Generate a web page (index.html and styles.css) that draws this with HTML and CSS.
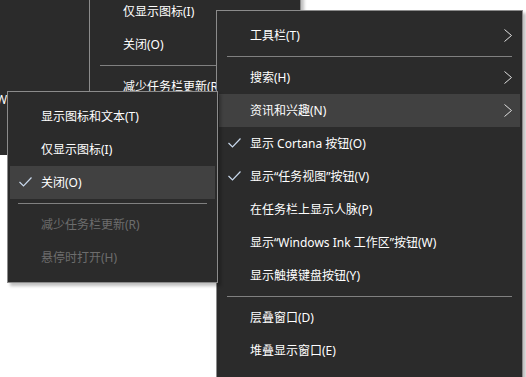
FILE: index.html
```html
<!DOCTYPE html>
<html lang="zh-CN">
<head>
    <meta charset="UTF-8">
    <title>任务栏菜单</title>
    <link rel="stylesheet" href="styles.css">
</head>
<body>

    <div class="desk">
        <!-- achtergrond venster -->
        <div class="panel"><span class="panel-text">W</span></div>

        <!-- oud submenu, half verborgen -->
        <div class="menu menu-back">
            <div class="item"><span class="slot"></span><span class="label">显示图标和文本(T)</span></div>
            <div class="item"><span class="slot"></span><span class="label">仅显示图标(I)</span></div>
            <div class="item"><span class="slot"></span><span class="label">关闭(O)</span></div>
            <div class="sep"></div>
            <div class="item"><span class="slot"></span><span class="label">减少任务栏更新(R)</span></div>
            <div class="item"><span class="slot"></span><span class="label">悬停时打开(H)</span></div>
        </div>

        <!-- hoofdmenu -->
        <div class="menu menu-main">
            <div class="item">
                <span class="slot"></span><span class="label">工具栏(T)</span>
                <svg class="arrow" width="8" height="13" viewBox="0 0 8 13"><polyline points="0.5,0.5 7.5,6.5 0.5,12.5"/></svg>
            </div>
            <div class="sep"></div>
            <div class="item">
                <span class="slot"></span><span class="label">搜索(H)</span>
                <svg class="arrow" width="8" height="13" viewBox="0 0 8 13"><polyline points="0.5,0.5 7.5,6.5 0.5,12.5"/></svg>
            </div>
            <div class="item active">
                <span class="slot"></span><span class="label">资讯和兴趣(N)</span>
                <svg class="arrow" width="8" height="13" viewBox="0 0 8 13"><polyline points="0.5,0.5 7.5,6.5 0.5,12.5"/></svg>
            </div>
            <div class="item">
                <span class="slot"><svg class="check" width="13" height="10" viewBox="0 0 13 10"><polyline points="0.5,5 4.5,9 12.5,0.5"/></svg></span>
                <span class="label">显示 Cortana 按钮(O)</span>
            </div>
            <div class="item">
                <span class="slot"><svg class="check" width="13" height="10" viewBox="0 0 13 10"><polyline points="0.5,5 4.5,9 12.5,0.5"/></svg></span>
                <span class="label">显示“任务视图”按钮(V)</span>
            </div>
            <div class="item"><span class="slot"></span><span class="label">在任务栏上显示人脉(P)</span></div>
            <div class="item"><span class="slot"></span><span class="label">显示“Windows Ink 工作区”按钮(W)</span></div>
            <div class="item"><span class="slot"></span><span class="label">显示触摸键盘按钮(Y)</span></div>
            <div class="sep"></div>
            <div class="item"><span class="slot"></span><span class="label">层叠窗口(D)</span></div>
            <div class="item"><span class="slot"></span><span class="label">堆叠显示窗口(E)</span></div>
        </div>

        <!-- open submenu -->
        <div class="menu menu-sub">
            <div class="item"><span class="slot"></span><span class="label">显示图标和文本(T)</span></div>
            <div class="item"><span class="slot"></span><span class="label">仅显示图标(I)</span></div>
            <div class="item active">
                <span class="slot"><svg class="check" width="13" height="10" viewBox="0 0 13 10"><polyline points="0.5,5 4.5,9 12.5,0.5"/></svg></span>
                <span class="label">关闭(O)</span>
            </div>
            <div class="sep"></div>
            <div class="item disabled"><span class="slot"></span><span class="label">减少任务栏更新(R)</span></div>
            <div class="item disabled"><span class="slot"></span><span class="label">悬停时打开(H)</span></div>
        </div>
    </div>

</body>
</html>
```

FILE: styles.css
```css
html, body {
    margin: 0;
    padding: 0;
    background-color: #ffffff;
}

body {
    font-family: "Noto Sans", "Noto Sans CJK SC", sans-serif;
    font-size: 12px;
    color: #ffffff;
}

.desk {
    position: relative;
    width: 526px;
    height: 377px;
    overflow: hidden;
}

.panel {
    position: absolute;
    left: 0;
    top: 0;
    width: 150px;
    height: 155px;
    background-color: #2b2b2b;
}

.panel-text {
    position: absolute;
    left: -4px;
    top: 92px;
    line-height: 16px;
}

.menu {
    position: absolute;
    box-sizing: border-box;
    background-color: #2b2b2b;
    border: 1px solid #8b8b8b;
    padding: 8px 2px;
    box-shadow: 3px 3px 3px rgba(0, 0, 0, 0.25);
}

.menu-back {
    left: 89px;
    top: -47px;
    width: 212px;
}

.menu-main {
    left: 216px;
    top: 10px;
    width: 307px;
    height: 400px;
}

.menu-sub {
    left: 7px;
    top: 91px;
    width: 211px;
}

.item {
    display: flex;
    align-items: center;
    height: 33px;
    padding-right: 8px;
    white-space: nowrap;
}

.item.active {
    background-color: #414141;
}

.item.disabled {
    color: #6d6d6d;
}

.slot {
    flex: 0 0 31px;
    display: flex;
    align-items: center;
}

.label {
    flex: 1;
    line-height: 16px;
}

.check {
    margin-left: 9px;
    margin-top: -2px;
}

.check polyline {
    fill: none;
    stroke: #c8d8ec;
    stroke-width: 1.2;
}

.arrow polyline {
    fill: none;
    stroke: #e0e0e0;
    stroke-width: 1;
}

.sep {
    height: 1px;
    margin: 4px 8px;
    background-color: #808080;
}
```
